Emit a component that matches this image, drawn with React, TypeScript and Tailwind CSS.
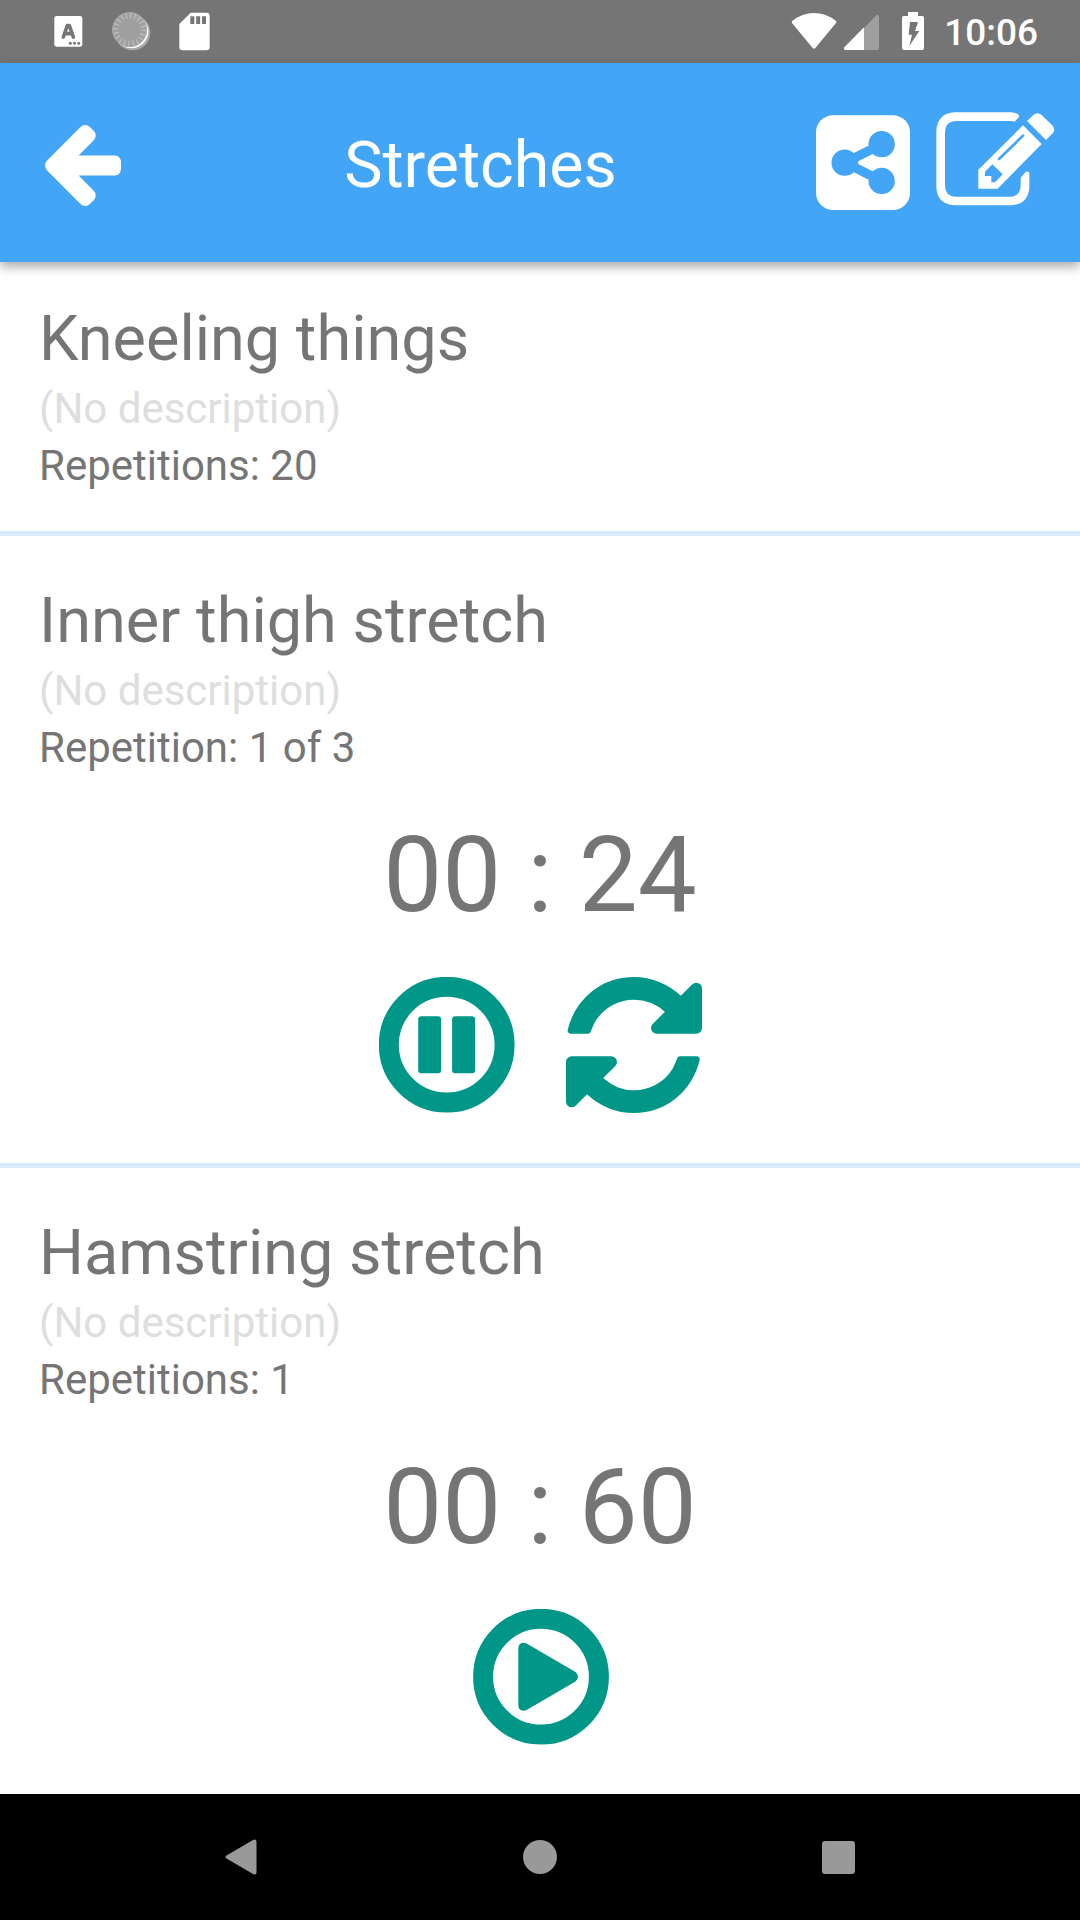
import React from "react";

function StatusNotifications() {
  return (
    <svg className="h-[63px] w-[180px]" viewBox="120 0 540 189" fill="#fff">
      <rect x="163" y="48" width="84" height="92" rx="7" />
      <path d="M190 111 L202 77 H208 L220 111 M195 101 H215" fill="none" stroke="#757575" strokeWidth="11" strokeLinecap="round" strokeLinejoin="round" />
      <g fill="#757575">
        <circle cx="211" cy="130" r="4.500" />
        <circle cx="223.500" cy="130" r="4.500" />
        <circle cx="236" cy="130" r="4.500" />
      </g>
      <circle cx="398" cy="98" r="53" fill="#a8a8a8" />
      <circle cx="394" cy="94" r="51" />
      <circle cx="389" cy="89" r="52" fill="#9f9f9f" />
      <circle cx="389" cy="89" r="42" fill="none" stroke="#bdbdbd" strokeWidth="17" strokeDasharray="4 9.19" />
      <circle cx="389" cy="89" r="51" fill="none" stroke="#adadad" strokeWidth="3" />
      <path fillRule="evenodd" d="M572 38 H619 Q629 38 629 48 V141 Q629 151 619 151 H548 Q538 151 538 141 V72 Z M571 49 V72 H583 V49 Z M588.500 49 V72 H600.500 V49 Z M606 49 V72 H618 V49 Z" />
    </svg>
  );
}

function StatusSignals() {
  return (
    <svg className="h-[63px] w-[146px]" viewBox="24 0 438 189" fill="#fff">
      <path d="M37 63 Q66 39 102 39 Q138 39 168 63 Q171 66 168 69 L106 144 Q102 149 98 144 L36 69 Q34 66 37 63 Z" />
      <path d="M252 84 L287 48 Q297 40 297 50 V144 Q297 150 291 150 H252 Z" fill="#9f9f9f" />
      <path d="M252 82 V150 H197 Q189 149 193 142 Z" />
      <path fillRule="evenodd" d="M384 36 H414 V48 H427 Q432 48 432 53 V145 Q432 150 427 150 H371 Q366 150 366 145 V53 Q366 48 371 48 H384 Z M390 66 L386 104 H396 L388 138 L418 93 H405 L414 66 Z" />
    </svg>
  );
}

function BackArrow() {
  return (
    <svg className="mt-1.5 h-[81px] w-[76px]" viewBox="0 21 1472 1558" preserveAspectRatio="none" fill="#fff">
      <path d="M1472 736v128q0 53-32.500 90.500t-84.500 37.500h-704l293 294q38 36 38 90t-38 90l-75 76q-37 37-90 37-52 0-91-37l-651-652q-37-37-37-90 0-52 37-91l651-650q38-38 91-38 52 0 90 38l75 74q38 38 38 91t-38 91l-293 293h704q52 0 84.500 37.500t32.500 90.500z" />
    </svg>
  );
}

function ShareIcon() {
  return (
    <svg className="h-[95px] w-[94px]" viewBox="108 345 282 285">
      <rect x="108" y="346" width="282" height="284" rx="51" fill="#fff" />
      <g fill="#42a5f5">
        <circle cx="194" cy="488" r="39.500" />
        <circle cx="305" cy="432.500" r="39.500" />
        <circle cx="305" cy="543" r="39.500" />
        <path d="M194 472 L220 460 L268 436 L290 440 L278 462 L236 483 Q231 488 236 493 L278 514 L290 530 L266 539 L220 516 L194 504 Z" />
      </g>
    </svg>
  );
}

function EditIcon() {
  return (
    <svg className="mb-[7px] h-[94px] w-[119px]" viewBox="467 335 357 282" fill="#fff">
      <path d="M693 336 Q706 337 713 342 Q718 346 715 351 L703 364 Q698 362 690 362 H525 Q494 364 494 395 V557 Q494 587 525 589 H690 Q719 587 721 557 V532 L735 516 Q741 511 747 517 V560 Q744 612 693 615 H523 Q470 612 468 560 V392 Q471 339 523 336 Z" />
      <path d="M728 375 L784 431 L652 565 H594 V508 Z" />
      <path d="M740 362 L760 343 Q771 334 783 343 L815 374 Q827 387 817 399 L797 419 Z" />
      <path d="M728 406 L656 476" stroke="#42a5f5" strokeWidth="8" strokeLinecap="round" />
      <path d="M636 492 L667 522 L644 546 H633 V527 H614 V514 Z" fill="#42a5f5" />
    </svg>
  );
}

function PauseIcon() {
  return (
    <svg className="size-[136px]" viewBox="0 0 136 136" fill="#009688">
      <circle cx="67.700" cy="67.700" r="57.900" fill="none" stroke="#009688" strokeWidth="20" />
      <rect x="39.200" y="39.200" width="23" height="57" rx="3" />
      <rect x="73.100" y="39.200" width="23" height="57" rx="3" />
    </svg>
  );
}

function PlayIcon() {
  return (
    <svg className="ml-px size-[136px]" viewBox="0 0 136 136" fill="#009688">
      <circle cx="68" cy="67.700" r="57.900" fill="none" stroke="#009688" strokeWidth="20" />
      <path d="M45.300 39 Q45.700 34.200 50 33.700 Q52 33.500 54 34.700 L102.500 62.900 Q105 64.900 105 67.700 Q105 70.500 102.500 72.500 L54 100.700 Q52 102 50 101.700 Q45.700 101.200 45.300 96.700 Z" />
    </svg>
  );
}

function RestartIcon() {
  return (
    <svg className="size-[136px]" viewBox="0 0 1536 1536" fill="#009688">
      <path d="M1511 928q0 5-1 7-64 268-268 434.500t-478 166.500q-146 0-282.500-55t-243.500-157l-129 129q-19 19-45 19t-45-19-19-45v-448q0-26 19-45t45-19h448q26 0 45 19t19 45-19 45l-137 137q71 66 161 102t187 36q134 0 250-65t186-179q11-17 53-117 8-23 30-23h192q13 0 22.500 9.500t9.500 22.500zm25-800v448q0 26-19 45t-45 19h-448q-26 0-45-19t-19-45 19-45l138-138q-148-137-349-137-134 0-250 65t-186 179q-11 17-53 117-8 23-30 23h-199q-13 0-22.500-9.500t-9.500-22.500v-7q65-268 270-434.500t480-166.500q146 0 284 55.500t245 156.500l130-129q19-19 45-19t45 19 19 45z" />
    </svg>
  );
}

type ExerciseProps = { name: string; detail: string };

function ExerciseText({ name, detail }: ExerciseProps) {
  return (
    <div className="flex flex-col gap-2 px-[39px]">
      <h2 className="text-[63px] leading-[74px]">{name}</h2>
      <p className="text-[42px] leading-[49px] text-[#dedede]">(No description)</p>
      <p className="text-[42px] leading-[49px]">{detail}</p>
    </div>
  );
}

function Timer({ time, children }: { time: string; children: React.ReactNode }) {
  return (
    <div className="mt-[42px] flex flex-col items-center">
      <div className="text-[105px] leading-[123px] whitespace-pre">{time}</div>
      <div className="mt-10 flex gap-[51px]">{children}</div>
    </div>
  );
}

export default function App() {
  return (
    <div className="flex h-[1920px] w-[1080px] flex-col overflow-hidden bg-white font-['Roboto',sans-serif] text-[#757575]">
      <div className="flex h-[63px] shrink-0 items-center justify-between bg-[#757575] pr-[42px] pl-10">
        <StatusNotifications />
        <div className="flex items-center gap-[10px]">
          <StatusSignals />
          <span className="pt-0.5 text-[37px] leading-[63px] font-medium text-white">10:06</span>
        </div>
      </div>

      <header className="relative z-10 flex h-[199px] shrink-0 items-center bg-[#42a5f5] pr-[25px] pl-[45px] shadow-[0_5px_10px_rgba(0,0,0,0.32)]">
        <BackArrow />
        <h1 className="flex-1 pt-[5px] pl-[24px] text-center text-[64.500px] leading-[77px] text-white">Stretches</h1>
        <div className="flex items-center gap-[26px]">
          <ShareIcon />
          <EditIcon />
        </div>
      </header>

      <main className="flex h-[1532px] shrink-0 flex-col">
        <section className="h-[274px] border-b-5 border-[#d7eafb] pt-10">
          <ExerciseText name="Kneeling things" detail="Repetitions: 20" />
        </section>
        <section className="h-[632px] border-b-5 border-[#d7eafb] pt-12">
          <ExerciseText name="Inner thigh stretch" detail="Repetition: 1 of 3" />
          <Timer time="00 : 24">
            <PauseIcon />
            <RestartIcon />
          </Timer>
        </section>
        <section className="pt-12">
          <ExerciseText name="Hamstring stretch" detail="Repetitions: 1" />
          <Timer time="00 : 60">
            <PlayIcon />
          </Timer>
        </section>
      </main>

      <nav className="flex h-[126px] shrink-0 items-center bg-black">
        <svg className="ml-[225px] h-9 w-8" viewBox="0 0 32 36" fill="#999">
          <path d="M28.500 0.800 Q31.500 -0.500 31.500 3 V33 Q31.500 36.500 28.500 35.200 L1.500 19.500 Q-0.500 18 1.500 16.500 Z" />
        </svg>
        <div className="ml-[266px] size-[34px] rounded-full bg-[#999]" />
        <div className="ml-[265px] size-[33px] rounded-[3px] bg-[#999]" />
      </nav>
    </div>
  );
}
